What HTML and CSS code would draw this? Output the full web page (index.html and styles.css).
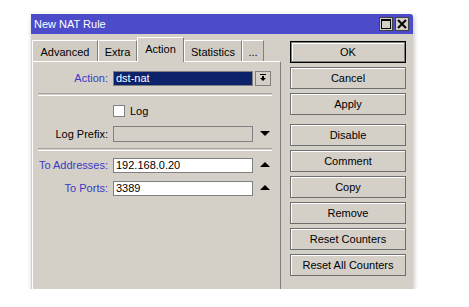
FILE: index.html
```html
<!DOCTYPE html>
<html lang="en">
    <head>
        <meta charset="utf-8">
        <title>New NAT Rule</title>
        <link rel="stylesheet" href="styles.css">
    </head>
    <body>
        <div class="window">
            <div class="titlebar">
                <span class="title">New NAT Rule</span>
                <div class="tb-btns">
                    <span class="tb-btn">
                        <svg width="10" height="10" viewBox="0 0 10 10"><rect x="0.5" y="0.5" width="9" height="9" fill="none" stroke="#000"/><rect x="0" y="0" width="10" height="2" fill="#000"/></svg>
                    </span>
                    <span class="tb-btn">
                        <svg width="10" height="10" viewBox="0 0 10 10"><path d="M1 1 L9 9 M9 1 L1 9" stroke="#000" stroke-width="2"/></svg>
                    </span>
                </div>
            </div>
            <div class="content">
                <div class="left">
                    <div class="tabs">
                        <span class="tab w-adv">Advanced</span>
                        <span class="tab w-extra">Extra</span>
                        <span class="tab w-action on">Action</span>
                        <span class="tab w-stat">Statistics</span>
                        <span class="tab w-more">...</span>
                    </div>
                    <div class="panel">
                        <div class="row row-action">
                            <label class="lbl blue">Action:</label>
                            <span class="field selected">dst-nat</span>
                            <span class="drop-btn">
                                <svg width="8" height="8" viewBox="0 0 8 8"><path d="M1 0.5 H7" stroke="#000"/><path d="M3 2 H5 V4 H7 L4 7 L1 4 H3 Z" fill="#000"/></svg>
                            </span>
                        </div>
                        <div class="sep sep-1"></div>
                        <div class="row row-log">
                            <span class="lbl"></span>
                            <span class="check"></span>
                            <span class="check-text">Log</span>
                        </div>
                        <div class="row row-prefix">
                            <label class="lbl">Log Prefix:</label>
                            <span class="field disabled"></span>
                            <span class="tri">
                                <svg width="10" height="6" viewBox="0 0 10 6"><path d="M0 0 H10 L5 5 Z" fill="#000"/></svg>
                            </span>
                        </div>
                        <div class="sep sep-2"></div>
                        <div class="row row-addr">
                            <label class="lbl blue">To Addresses:</label>
                            <span class="field">192.168.0.20</span>
                            <span class="tri">
                                <svg width="10" height="6" viewBox="0 0 10 6"><path d="M0 5 H10 L5 0 Z" fill="#000"/></svg>
                            </span>
                        </div>
                        <div class="row row-ports">
                            <label class="lbl blue">To Ports:</label>
                            <span class="field">3389</span>
                            <span class="tri">
                                <svg width="10" height="6" viewBox="0 0 10 6"><path d="M0 5 H10 L5 0 Z" fill="#000"/></svg>
                            </span>
                        </div>
                    </div>
                </div>
                <div class="buttons">
                    <span class="btn default">OK</span>
                    <span class="btn">Cancel</span>
                    <span class="btn">Apply</span>
                    <span class="btn gap">Disable</span>
                    <span class="btn">Comment</span>
                    <span class="btn">Copy</span>
                    <span class="btn">Remove</span>
                    <span class="btn">Reset Counters</span>
                    <span class="btn">Reset All Counters</span>
                </div>
            </div>
        </div>
    </body>
</html>
```

FILE: styles.css
```css
body {
    margin: 0;
    background: #fff;
    font-family: "Liberation Sans", Arial, sans-serif;
    font-size: 11px;
    color: #000;
}
.window {
    margin: 14px 0 0 31px;
    width: 382px;
    height: 275px;
    background: #d4d0c8;
    box-shadow: 1px 2px 5px rgba(0, 0, 0, 0.25);
    border-top-right-radius: 3px;
}
.titlebar {
    height: 20px;
    background: #4c4ccb;
    display: flex;
    align-items: center;
    justify-content: space-between;
    padding: 0 4px 0 3px;
    border-top-right-radius: 3px;
}
.title {
    color: #fff;
}
.tb-btns {
    display: flex;
    gap: 2px;
}
.tb-btn {
    width: 12px;
    height: 12px;
    background: #d4d0c8;
    border: 1px solid #404040;
    display: flex;
    align-items: center;
    justify-content: center;
}
.content {
    display: flex;
    padding: 3px 7px 0 1px;
    gap: 9px;
}
.left {
    width: 249px;
}
.tabs {
    display: flex;
    align-items: flex-end;
    height: 24px;
    position: relative;
    z-index: 1;
}
.tab {
    height: 21px;
    box-sizing: border-box;
    border-top: 1px solid #fff;
    border-left: 1px solid #fff;
    border-right: 1px solid #808080;
    background: #d0ccc4;
    display: flex;
    align-items: center;
    justify-content: center;
    padding-top: 1px;
}
.tab.on {
    height: 25px;
    margin-bottom: -1px;
    background: #d4d0c8;
    padding-bottom: 3px;
}
.w-adv { width: 66px; }
.w-extra { width: 39px; }
.w-action { width: 47px; }
.w-stat { width: 58px; }
.w-more { width: 22px; }
.panel {
    height: 228px;
    box-sizing: border-box;
    border-top: 1px solid #fff;
    border-left: 1px solid #fff;
    border-right: 1px solid #808080;
    padding-top: 8px;
}
.row {
    display: flex;
    align-items: center;
    height: 16px;
}
.lbl {
    width: 75px;
    text-align: right;
    margin-right: 5px;
    flex: none;
}
.blue {
    color: #3a3ac4;
}
.field {
    width: 140px;
    height: 15px;
    box-sizing: border-box;
    border: 1px solid #808080;
    background: #fff;
    padding-left: 2px;
    line-height: 13px;
    flex: none;
}
.field.selected {
    background: #0c226a;
    color: #fff;
}
.field.disabled {
    height: 16px;
    background: #d4d0c8;
}
.drop-btn {
    width: 16px;
    height: 15px;
    box-sizing: border-box;
    margin-left: 2px;
    border: 1px solid #808080;
    display: flex;
    align-items: center;
    justify-content: center;
}
.tri {
    width: 10px;
    margin-left: 7px;
    display: flex;
}
.sep {
    margin-left: 5px;
    width: 234px;
    height: 1px;
    border-top: 1px solid #a8a59f;
    border-bottom: 1px solid #fff;
}
.sep-1 { margin-top: 7px; }
.sep-2 { margin-top: 6px; }
.row-log { margin-top: 7px; }
.row-prefix { margin-top: 7px; }
.row-addr { margin-top: 6px; }
.row-ports { margin-top: 7px; }
.check {
    width: 12px;
    height: 12px;
    box-sizing: border-box;
    background: #fff;
    border: 1px solid #808080;
    margin-right: 5px;
}
.buttons {
    width: 116px;
    display: flex;
    flex-direction: column;
    gap: 4px;
    padding-top: 4px;
}
.btn {
    height: 22px;
    box-sizing: border-box;
    border: 1px solid #6e6e6e;
    box-shadow: inset 1px 1px 0 #fff;
    display: flex;
    align-items: center;
    justify-content: center;
}
.btn.default {
    border: 1px solid #000;
    box-shadow: inset 0 0 0 1px #808080, inset 2px 2px 0 #fff;
}
.btn.gap {
    margin-top: 5px;
}
```
